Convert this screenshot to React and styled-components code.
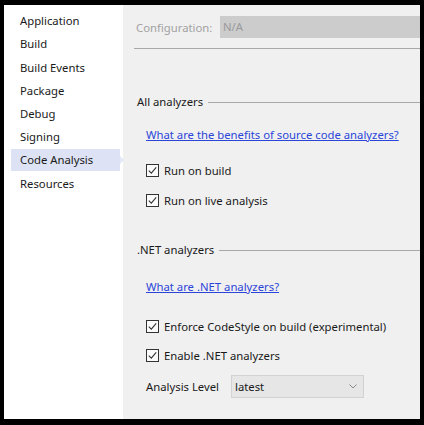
import styled, { createGlobalStyle } from 'styled-components';

const GlobalStyle = createGlobalStyle`
    html, body {
        margin: 0;
        padding: 0;
        background: #000;
    }
    * {
        box-sizing: border-box;
    }
`;

const Frame = styled.div`
    width: 424px;
    height: 425px;
    padding: 5px 4px 6px 4px;
    background: #000;
    font-family: "Noto Sans", "Open Sans", sans-serif;
    font-size: 11.3px;
    color: #1a1a1a;
`;

const Window = styled.div`
    display: flex;
    height: 100%;
    overflow: hidden;
`;

const Sidebar = styled.nav`
    width: 119px;
    flex: none;
    background: #fff;
    padding-top: 5.2px;
    display: flex;
    flex-direction: column;
    gap: 1.2px;
`;

const NavItem = styled.div`
    position: relative;
    height: 22px;
    line-height: 22px;
    margin: 0 3px 0 7px;
    padding-left: 9px;
    background: ${(p) => (p.$active ? '#dde3f4' : 'transparent')};

    ${(p) =>
        p.$active &&
        `
        &::after {
            content: '';
            position: absolute;
            right: -4px;
            top: 7px;
            border-top: 4px solid transparent;
            border-bottom: 4px solid transparent;
            border-left: 4px solid #e3e8f5;
        }
    `}
`;

const Content = styled.main`
    flex: 1;
    background: #f0f0f0;
    padding: 11px 0 0 11px;
    min-width: 0;
`;

const ConfigRow = styled.div`
    display: flex;
    align-items: center;
    height: 22px;
    padding-left: 2px;
`;

const ConfigLabel = styled.span`
    color: #a2a2a2;
    width: 84px;
`;

const ConfigBox = styled.div`
    flex: 1;
    height: 22px;
    line-height: 22px;
    background: #cccccc;
    color: #9a9a9a;
    padding-left: 3px;
`;

const Divider = styled.div`
    height: 1px;
    background: #a8a8a8;
    margin-top: 10px;
`;

const SectionHeader = styled.div`
    display: flex;
    align-items: center;
    gap: 5px;
    line-height: 16px;
    margin-top: ${(p) => p.$top}px;
    padding-left: 3px;

    &::after {
        content: '';
        flex: 1;
        height: 1px;
        background: #a8a8a8;
    }
`;

const Link = styled.a`
    display: block;
    width: fit-content;
    line-height: 16px;
    margin: ${(p) => p.$top}px 0 0 12px;
    color: #2b45d9;
    text-decoration: underline;
    cursor: pointer;
`;

const CheckRow = styled.label`
    display: flex;
    align-items: center;
    gap: 5px;
    height: 16px;
    margin: ${(p) => p.$top}px 0 0 12px;
`;

const Box = styled.span`
    width: 13px;
    height: 13px;
    flex: none;
    border: 1px solid #333;
    background: #fbfbfb;
    display: flex;
    align-items: center;
    justify-content: center;
`;

const LevelRow = styled.div`
    display: flex;
    align-items: center;
    margin: 12px 0 0 12px;
`;

const LevelLabel = styled.span`
    width: 85px;
`;

const Select = styled.div`
    width: 133px;
    height: 23px;
    display: flex;
    align-items: center;
    justify-content: space-between;
    padding: 0 6px 0 3px;
    background: #e6e6e6;
    border: 1px solid #d2d2d2;
`;

function CheckBox({ label, top }) {
    return (
        <CheckRow $top={top}>
            <Box>
                <svg width="9" height="9" viewBox="0 0 9 9">
                    <path d="M0.8 4.6 L3.3 7.1 L8.2 1.4" fill="none" stroke="#333" strokeWidth="1.1" />
                </svg>
            </Box>
            {label}
        </CheckRow>
    );
}

const navItems = ['Application', 'Build', 'Build Events', 'Package', 'Debug', 'Signing', 'Code Analysis', 'Resources'];

export default function App() {
    return (
        <Frame>
            <GlobalStyle />
            <Window>
                <Sidebar>
                    {navItems.map((item) => (
                        <NavItem key={item} $active={item === 'Code Analysis'}>
                            {item}
                        </NavItem>
                    ))}
                </Sidebar>
                <Content>
                    <ConfigRow>
                        <ConfigLabel>Configuration:</ConfigLabel>
                        <ConfigBox>N/A</ConfigBox>
                    </ConfigRow>
                    <Divider />

                    <SectionHeader $top={45}>All analyzers</SectionHeader>
                    <Link $top={17}>What are the benefits of source code analyzers?</Link>
                    <CheckBox top={19} label="Run on build" />
                    <CheckBox top={14} label="Run on live analysis" />

                    <SectionHeader $top={34}>.NET analyzers</SectionHeader>
                    <Link $top={21}>What are .NET analyzers?</Link>
                    <CheckBox top={23} label="Enforce CodeStyle on build (experimental)" />
                    <CheckBox top={13} label="Enable .NET analyzers" />

                    <LevelRow>
                        <LevelLabel>Analysis Level</LevelLabel>
                        <Select>
                            latest
                            <svg width="8" height="5" viewBox="0 0 8 5">
                                <path d="M0.5 0.5 L4 4 L7.5 0.5" fill="none" stroke="#8a8a8a" strokeWidth="1" />
                            </svg>
                        </Select>
                    </LevelRow>
                </Content>
            </Window>
        </Frame>
    );
}
